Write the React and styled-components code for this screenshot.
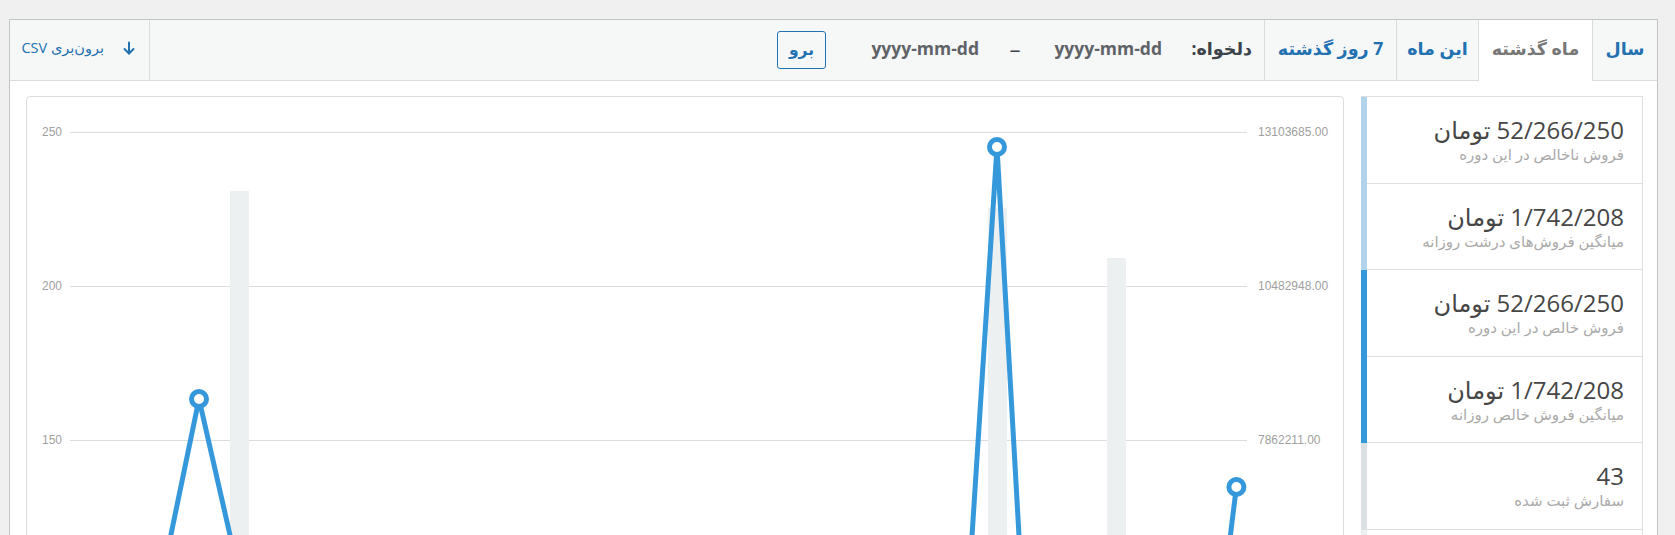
import React from 'react';
import styled, { createGlobalStyle } from 'styled-components';

const GlobalStyle = createGlobalStyle`
  html, body {
    margin: 0;
    padding: 0;
    background: #f0f0f1;
    overflow: hidden;
  }
  body {
    font-family: "Open Sans", "DejaVu Sans", sans-serif;
    color: #3c434a;
  }
`;

const tabs = [
  { label: 'سال', width: 65 },
  { label: 'ماه گذشته', width: 114, active: true },
  { label: 'این ماه', width: 82 },
  { label: '7 روز گذشته', width: 132 },
];

const stats = [
  { value: '52/266/250 تومان', label: 'فروش ناخالص در این دوره', color: '#b1d4ea' },
  { value: '1/742/208 تومان', label: 'میانگین فروش‌های درشت روزانه', color: '#b1d4ea' },
  { value: '52/266/250 تومان', label: 'فروش خالص در این دوره', color: '#3498db' },
  { value: '1/742/208 تومان', label: 'میانگین فروش خالص روزانه', color: '#3498db' },
  { value: '43', label: 'سفارش ثبت شده', color: '#dbe1e3' },
  { value: '118', label: 'مورد خریداری شده', color: '#ecf0f1' },
];

// chart geometry, relative to the inside of the chart box
const grid = [
  { y: 35.5, left: '250', right: '13103685.00' },
  { y: 189.5, left: '200', right: '10482948.00' },
  { y: 343.5, left: '150', right: '7862211.00' },
  { y: 497.5, left: '100', right: '5241474.00' },
];

const bars = [
  { x: 203, y: 94 },
  { x: 961, y: 111 },
  { x: 1080, y: 161 },
];

const lineY = [
  700, 620, 495, 302, 477, 640, 780, 700, 820, 660,
  740, 700, 800, 650, 720, 760, 690, 820, 640, 700,
  760, 600, 671, 50, 755, 680, 720, 640, 710, 390,
];
const points = lineY.map((y, i) => ({ x: 52.3 + i * 39.9, y }));

function App() {
  return (
    <>
      <GlobalStyle />
      <Page>
        <Postbox>
          <RangeBar>
            {tabs.map((t) => (
              <Tab key={t.label} $w={t.width} $active={t.active}>{t.label}</Tab>
            ))}
            <Custom>
              <CustomLabel>دلخواه:</CustomLabel>
              <DateInput $gap={41} placeholder="yyyy-mm-dd" />
              <Dash>–</Dash>
              <DateInput $gap={30} placeholder="yyyy-mm-dd" />
              <GoButton>برو</GoButton>
            </Custom>
            <Export>
              <svg width="12" height="14" viewBox="0 0 12 14" fill="none" stroke="#2271b1" strokeWidth="2" strokeLinecap="round" strokeLinejoin="round">
                <path d="M6 1.5V12.5" />
                <path d="M1.5 8L6 12.5L10.5 8" />
              </svg>
              <span>برون‌بری CSV</span>
            </Export>
          </RangeBar>

          <Main>
            <Legend>
              {stats.map((s, i) => (
                <LegendItem key={i} $color={s.color}>
                  <Value>{s.value}</Value>
                  {s.label}
                </LegendItem>
              ))}
            </Legend>

            <ChartBox>
              <svg width="100%" height="640" style={{ display: 'block' }}>
                {grid.map((g) => (
                  <g key={g.y}>
                    <line x1="43" x2="1220" y1={g.y} y2={g.y} stroke="#dcdcde" strokeWidth="1" />
                    <AxisLabel x="35" y={g.y} textAnchor="end">{g.left}</AxisLabel>
                    <AxisLabel x="1231" y={g.y} textAnchor="start">{g.right}</AxisLabel>
                  </g>
                ))}
                {bars.map((b) => (
                  <rect key={b.x} x={b.x} y={b.y} width="19" height={640 - b.y} fill="#ecf0f1" />
                ))}
                <polyline
                  points={points.map((p) => `${p.x},${p.y}`).join(' ')}
                  fill="none"
                  stroke="#3498db"
                  strokeWidth="5"
                  strokeLinejoin="round"
                />
                {points.map((p, i) => (
                  <circle key={i} cx={p.x} cy={p.y} r="7.5" fill="#fff" stroke="#3498db" strokeWidth="5" />
                ))}
              </svg>
            </ChartBox>
          </Main>
        </Postbox>
      </Page>
    </>
  );
}

const Page = styled.div`
  padding: 19px 17px 0 9px;
`;

const Postbox = styled.div`
  border: 1px solid #c3c4c7;
  background: #fff;
`;

const RangeBar = styled.div`
  direction: rtl;
  display: flex;
  height: 61px;
  background: #f6f7f7;
  box-shadow: inset 0 -1px 0 #dcdcde;
`;

const Tab = styled.a`
  flex: none;
  box-sizing: border-box;
  width: ${(p) => p.$w}px;
  display: flex;
  align-items: center;
  justify-content: center;
  padding-bottom: 6px;
  border-left: 1px solid #dcdcde;
  background: ${(p) => (p.$active ? '#fff' : 'transparent')};
  color: ${(p) => (p.$active ? '#777' : '#2271b1')};
  font-size: 17.5px;
  font-weight: 700;
  text-decoration: none;
  white-space: nowrap;
  cursor: pointer;
`;

const Custom = styled.div`
  display: flex;
  align-items: center;
  padding-right: 12px;
  padding-bottom: 2px;
`;

const CustomLabel = styled.span`
  width: 49px;
  margin-bottom: 4px;
  font-size: 17.5px;
  font-weight: 700;
  color: #3c434a;
  white-space: nowrap;
`;

const DateInput = styled.input`
  width: 110px;
  margin-right: ${(p) => p.$gap}px;
  margin-bottom: 3px;
  padding: 0;
  border: 0;
  background: transparent;
  font: 700 17.5px "Open Sans", sans-serif;
  color: #3c434a;
  outline: none;

  &::placeholder {
    color: #5f6368;
    opacity: 1;
  }
`;

const Dash = styled.span`
  width: 12px;
  margin-right: 31px;
  margin-bottom: 4px;
  text-align: center;
  font-size: 22px;
  line-height: 1;
  color: #3c434a;
`;

const GoButton = styled.button`
  box-sizing: border-box;
  width: 49px;
  height: 38px;
  margin-right: 43px;
  padding: 0 0 2px;
  border: 1px solid #2271b1;
  border-radius: 3px;
  background: #f6f7f7;
  color: #2271b1;
  font: 700 15.5px "Open Sans", "DejaVu Sans", sans-serif;
  cursor: pointer;
`;

const Export = styled.a`
  box-sizing: border-box;
  width: 140px;
  margin-right: auto;
  display: flex;
  align-items: center;
  gap: 19px;
  padding-right: 14px;
  padding-bottom: 6px;
  border-right: 1px solid #dcdcde;
  color: #2271b1;
  font-size: 14.5px;
  white-space: nowrap;
  cursor: pointer;
`;

const Main = styled.div`
  direction: rtl;
  display: flex;
  align-items: flex-start;
  gap: 17px;
  padding: 15px 14px 16px 16px;
`;

const Legend = styled.ul`
  flex: none;
  box-sizing: border-box;
  width: 282px;
  margin: 0;
  padding: 0;
  list-style: none;
  border-top: 1px solid #dfdfdf;
  border-right: 1px solid #dfdfdf;
`;

const LegendItem = styled.li`
  box-sizing: border-box;
  height: 86.5px;
  padding: 18px 18px 0 12px;
  border-left: 6px solid ${(p) => p.$color};
  box-shadow: inset 0 -1px 0 0 #dfdfdf;
  color: #aaa;
  font-size: 15px;
  line-height: 20px;
  white-space: nowrap;
`;

const Value = styled.strong`
  display: block;
  font-size: 24px;
  line-height: 29px;
  font-weight: 400;
  color: #464646;
`;

const ChartBox = styled.div`
  direction: ltr;
  flex: 1;
  height: 640px;
  border: 1px solid #dcdcde;
  border-radius: 4px;
  background: #fff;
  overflow: hidden;
`;

const AxisLabel = styled.text`
  font-family: "Liberation Sans", sans-serif;
  font-size: 12px;
  fill: #a0a0a0;
  dominant-baseline: middle;
`;

export default App;
